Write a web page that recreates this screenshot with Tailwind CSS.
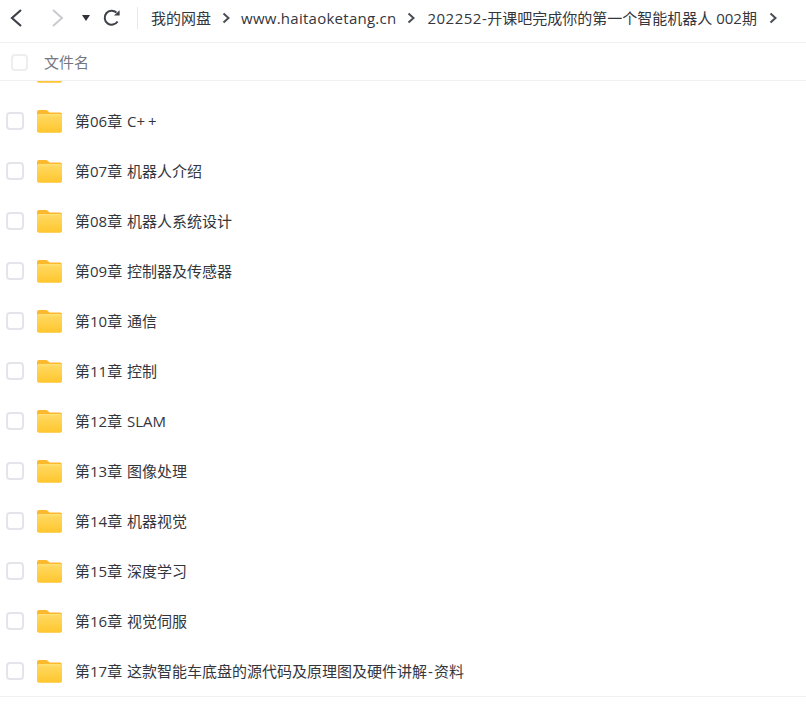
<!DOCTYPE html>
<html lang="zh-CN">
<head>
  <meta charset="UTF-8" />
  <title>文件列表</title>
  <script src="https://cdn.jsdelivr.net/npm/@tailwindcss/browser@4"></script>
</head>
<body class="bg-white h-[718px] w-[806px] overflow-hidden font-['Open_Sans','Noto_Sans_CJK_SC',sans-serif] text-[15px] text-[#33363d]">

  <!-- Toolbar -->
  <div class="h-[43px] pb-[6px] border-b border-[#f0f0f2] flex items-center">
    <svg class="ml-[9px] w-[14px] h-[20px]" viewBox="0 0 14 20" fill="none" stroke="#3d4149" stroke-width="2.2"><path d="M12 2 L3 10 L12 18" /></svg>
    <svg class="ml-[27px] w-[14px] h-[20px]" viewBox="0 0 14 20" fill="none" stroke="#c9cbd0" stroke-width="2"><path d="M3 2 L12 10 L3 18" /></svg>
    <svg class="ml-[17px] w-[10px] h-[8px]" viewBox="0 0 10 8" fill="#2f3238"><path d="M1 1 H9 L5 7 Z" /></svg>
    <svg class="ml-[12px] w-[18px] h-[18px]" viewBox="0 0 18 18" fill="none" stroke="#3d4149" stroke-width="2"><path d="M14.6 12.5 A7 7 0 1 1 13.5 3.6" /><path d="M11 6.6 H16.6 V1.2" stroke="none" fill="#3d4149" /></svg>
    <div class="ml-[16px] w-px h-[22px] bg-[#e8e8ea]"></div>
    <div class="ml-[13px] flex items-center whitespace-nowrap">
      <span>我的网盘</span>
      <svg class="ml-[11px] w-[8px] h-[12px]" viewBox="0 0 8 12" fill="none" stroke="#4a4d55" stroke-width="2"><path d="M1.5 1.5 L6.5 6 L1.5 10.5" /></svg>
      <span class="ml-[11px] tracking-[0.26px]">www.haitaoketang.cn</span>
      <svg class="ml-[11px] w-[8px] h-[12px]" viewBox="0 0 8 12" fill="none" stroke="#4a4d55" stroke-width="2"><path d="M1.5 1.5 L6.5 6 L1.5 10.5" /></svg>
      <span class="ml-[12px]"><span class="tracking-[0.5px]">202252-</span>开课吧完成你的第一个智能机器人 002期</span>
      <svg class="ml-[12px] w-[8px] h-[12px]" viewBox="0 0 8 12" fill="none" stroke="#4a4d55" stroke-width="2"><path d="M1.5 1.5 L6.5 6 L1.5 10.5" /></svg>
    </div>
  </div>

  <!-- Header -->
  <div class="h-[38px] pt-[1px] border-b border-[#f0f0f2] flex items-center">
    <span class="ml-[11px] w-[17px] h-[17px] rounded-[4px] border-2 border-[#eeeef0]"></span>
    <span class="ml-[16px] text-[#74777f]">文件名</span>
  </div>

  <!-- Rows -->
  <div class="h-[616px] overflow-hidden border-b border-[#f0f0f2]">
    <div id="list" class="mt-[-35px]"></div>
  </div>

  <svg class="absolute w-0 h-0">
    <defs>
      <linearGradient id="folderFront" x1="0" y1="0" x2="0" y2="1">
        <stop offset="0" stop-color="#ffe27a" />
        <stop offset="0.15" stop-color="#ffd75c" />
        <stop offset="1" stop-color="#ffc62e" />
      </linearGradient>
    </defs>
  </svg>

  <template id="row">
    <div class="h-[50px] flex items-center">
      <span class="ml-[6px] w-[18px] h-[18px] rounded-[4px] border-2 border-[#e3e5ea] shrink-0"></span>
      <svg class="ml-[13px] w-[25px] h-[24px] shrink-0" viewBox="0 0 25 24">
        <path d="M0 3 Q0 1 2 1 H9 Q10.5 1 11.5 2.5 L12.5 3.5 H23 Q25 3.5 25 5.5 V21.5 Q25 23.5 23 23.5 H2 Q0 23.5 0 21.5 Z" fill="#fdb92d" />
        <path d="M0 7 Q0 5 2 5 H23 Q25 5 25 7 V21.5 Q25 23.5 23 23.5 H2 Q0 23.5 0 21.5 Z" fill="url(#folderFront)" />
      </svg>
      <span class="row-name ml-[13px] whitespace-nowrap [word-spacing:1px]"></span>
    </div>
  </template>

  <script>
    const names = [
      "",
      "第06章 C<span class='tracking-[3px]'>++</span>",
      "第07章 机器人介绍",
      "第08章 机器人系统设计",
      "第09章 控制器及传感器",
      "第10章 通信",
      "第11章 控制",
      "第12章 SLAM",
      "第13章 图像处理",
      "第14章 机器视觉",
      "第15章 深度学习",
      "第16章 视觉伺服",
      "第17章 这款智能车底盘的源代码及原理图及硬件讲解<span class='px-[1px]'>-</span>资料"
    ];
    const list = document.getElementById("list");
    const tpl = document.getElementById("row");
    names.forEach(name => {
      const row = tpl.content.cloneNode(true);
      row.querySelector(".row-name").innerHTML = name;
      list.appendChild(row);
    });
  </script>
</body>
</html>
